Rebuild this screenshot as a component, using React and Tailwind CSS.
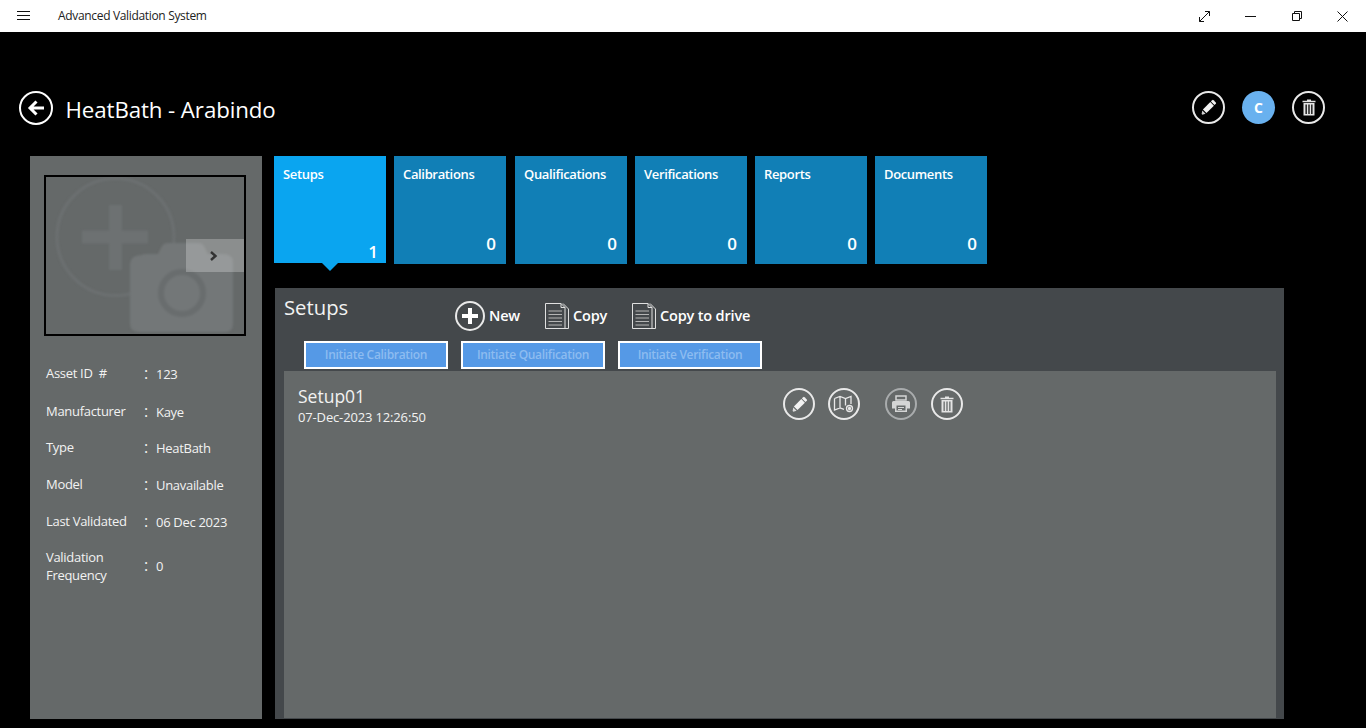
function Ring({ children, size = "w-[33px] h-[33px]", border = "border-[#e9e9e9]" }) {
  return (
    <div className={"shrink-0 rounded-full border-2 flex items-center justify-center " + size + " " + border}>
      {children}
    </div>
  );
}
function Pencil() {
  return (
    <svg width="17" height="17" viewBox="0 0 17 17" fill="#f2f2f2">
      <path d="M12.2 1.2a1 1 0 0 1 1.4 0l2.2 2.200a1 1 0 0 1 0 1.400l-1.300 1.300-3.600-3.600z" />
      <path d="M10.300 3.100l3.600 3.600-7.400 7.400-3.600-3.600z" />
      <path d="M2.300 11.400l3.300 3.300-3.200 1.100-.8-.8z" opacity=".85" />
    </svg>
  );
}
function Trash() {
  return (
    <svg width="14" height="17" viewBox="0 0 14 17" fill="#e4e4e4">
      <path d="M5 .5h4v1.200h4.500v1.500H.5V1.700H5z" />
      <path fillRule="evenodd" d="M1.500 4h11v12.500h-11zM3.500 5.500v9.500h1.300V5.500zM6.350 5.500v9.500h1.300V5.500zM9.200 5.500v9.500h1.300V5.500z" />
    </svg>
  );
}
function Doc() {
  return (
    <svg width="24" height="26" viewBox="0 0 24 26" fill="none" stroke="#e0e0e0" strokeWidth="1">
      <path d="M.5.500h15.500l4 4v21H.5z" />
      <path d="M16 .5v4h4" />
      <path d="M18 .5l5.500 5.500v19.500h-3.500" />
      <path d="M3.500 8h13.500M3.500 11.500h13.500M3.500 15h13.500M3.500 18.500h13.500M3.500 22h13.500" stroke="#b5b5b5" />
    </svg>
  );
}
function Tab({ label, n, active, extra = "" }) {
  return (
    <div className={"relative w-[112px] " + (active ? "h-[107px] bg-[#0aa5f0]" : "h-[108px] bg-[#117fb6]") + " " + extra}>
      <div className="absolute left-[9px] top-[9px] text-[13px] leading-[18px] font-semibold text-white tracking-[-0.35px]">{label}</div>
      <div className={"absolute text-[17px] leading-[22px] font-semibold text-white " + (active ? "right-[8px] bottom-0" : "right-[10px] bottom-[9px]")}>{n}</div>
      {active && (
        <div className="absolute left-[48px] top-full w-0 h-0 border-l-[8px] border-r-[8px] border-t-[8px] border-l-transparent border-r-transparent border-t-[#0aa5f0]" />
      )}
    </div>
  );
}
function Info({ label, value, h, label2 }) {
  return (
    <div className={"flex items-center text-[13px] text-[#f2f2f2] " + h}>
      <div className={"w-[98px] leading-[18px] tracking-[-0.3px] shrink-0 whitespace-pre " + (label2 ? "" : "-translate-y-px")}>
        {label}
        {label2 && <br />}
        {label2}
      </div>
      <div className="w-[12px] text-[16px] shrink-0 leading-[18px] -translate-y-px">:</div>
      <div className="leading-[18px] tracking-[-0.3px]">{value}</div>
    </div>
  );
}
function InitBtn({ children }) {
  return (
    <div className="w-[144px] h-[28px] border-2 border-white bg-[#5599e6] flex items-center justify-center text-[12px] font-semibold text-[#8dbcf0] tracking-[-0.3px]">
      {children}
    </div>
  );
}
export default function App() {
  return (
    <div className="w-[1366px] h-[728px] bg-black overflow-hidden flex flex-col" style={{ fontFamily: '"Open Sans", sans-serif' }}>
      <div className="h-8 bg-white flex items-center shrink-0">
        <svg className="ml-[17px]" width="13" height="10" viewBox="0 0 13 10" stroke="#111" strokeWidth="1">
          <path d="M0 .5h13M0 4.500h13M0 8.500h13" />
        </svg>
        <div className="ml-[28px] text-[12px] tracking-[-0.33px] text-[#222]">Advanced Validation System</div>
        <div className="ml-auto flex items-center">
          <svg className="mr-[35px]" width="11" height="11" viewBox="0 0 11 11" fill="none" stroke="#111" strokeWidth="1">
            <path d="M.5 10.500l10-10M6 .5h4.500V5M.5 6v4.500H5" />
          </svg>
          <svg className="mr-[36px]" width="11" height="1" viewBox="0 0 11 1" stroke="#111">
            <path d="M0 .5h11" />
          </svg>
          <svg className="mr-[35px]" width="10" height="10" viewBox="0 0 10 10" fill="none" stroke="#111">
            <path d="M.5 2.500h7v7h-7zM2.500 2.500v-2h7v7h-2" />
          </svg>
          <svg className="mr-[18px]" width="11" height="11" viewBox="0 0 11 11" stroke="#111">
            <path d="M.5.500l10 10M10.500.500l-10 10" />
          </svg>
        </div>
      </div>
      <div className="h-[124px] shrink-0 flex items-start pt-[59px] pl-[19px]">
        <Ring size="w-[34px] h-[34px]" border="border-white">
          <svg width="20" height="18" viewBox="0 0 20 18" fill="none" stroke="#fff" strokeWidth="3">
            <path d="M18 9H4M10.500 2.500L4 9l6.500 6.500" />
          </svg>
        </Ring>
        <div className="ml-[12.500px] text-[22.300px] leading-[38px] text-white tracking-[-0.1px]">HeatBath - Arabindo</div>
        <div className="ml-auto mr-[41px] flex items-center gap-[17px]">
          <Ring><Pencil /></Ring>
          <div className="w-[33px] h-[33px] rounded-full bg-[#69b1ef] flex items-center justify-center text-white text-[14px] font-bold">C</div>
          <Ring><Trash /></Ring>
        </div>
      </div>
      <div className="flex pl-[30px] gap-[12px]">
        <div className="w-[232px] h-[563px] bg-[#656969] pt-[19px] pl-[14px]">
          <div className="relative w-[202px] h-[161px] border-2 border-black overflow-hidden">
            <svg width="198" height="157" viewBox="0 0 198 157" className="absolute left-0 top-0 blur-[0.8px]">
              <circle cx="69.500" cy="60" r="58.500" fill="none" stroke="#6c7071" strokeWidth="3" />
              <path d="M69.500 28v65M36 60h66" stroke="#6d7172" strokeWidth="13" />
              <path d="M96 78q0-1 4-1h12l4-8q2-3 6-3h30q4 0 6 3l4 8h14q11 0 11 8v62q0 8-8 8H94q-10 0-10-8V88q0-10 12-10z" fill="#737778" />
              <circle cx="136" cy="116" r="21" fill="#737778" stroke="#696d6e" strokeWidth="6" />
            </svg>
            <div className="absolute right-0 top-[62px] w-[58px] h-[33px] bg-[#ffffff]/25 flex items-center justify-center">
              <svg width="10" height="10" viewBox="0 0 10 10" fill="none" stroke="#333" strokeWidth="2.400" className="-ml-[2px]">
                <path d="M2 1l4.500 4L2 9" />
              </svg>
            </div>
          </div>
          <div className="mt-[19px] pl-[2px]">
            <Info label="Asset ID  #" value="123" h="h-[37px]" />
            <Info label="Manufacturer" value="Kaye" h="h-[37px] pt-[2px]" />
            <Info label="Type" value="HeatBath" h="h-[37px]" />
            <Info label="Model" value="Unavailable" h="h-[37px]" />
            <Info label="Last Validated" value="06 Dec 2023" h="h-[37px]" />
            <Info label="Validation" label2="Frequency" value="0" h="h-[52px]" />
          </div>
        </div>
        <div className="flex flex-col">
          <div className="flex gap-[8px] h-[132px] items-start">
            <Tab label="Setups" n="1" active />
            <Tab label="Calibrations" n="0" />
            <Tab label="Qualifications" n="0" extra="ml-px" />
            <Tab label="Verifications" n="0" />
            <Tab label="Reports" n="0" />
            <Tab label="Documents" n="0" />
          </div>
          <div className="ml-px w-[1009px] h-[431px] bg-[#44484b] flex flex-col pl-[9px] pb-px">
            <div className="flex h-[53px] items-start">
              <div className="w-[171px] pt-[4px] text-[20.300px] leading-[30px] text-[#f2f2f2]">Setups</div>
              <div className="flex items-center pt-[12.500px] text-white text-[14.500px] font-semibold tracking-[-0.17px]">
                <Ring size="w-[30px] h-[30px]">
                  <svg width="18" height="18" viewBox="0 0 18 18" stroke="#fff" strokeWidth="4"><path d="M9 1v16M1 9h16" /></svg>
                </Ring>
                <span className="ml-[4px] w-[56px]">New</span>
                <Doc />
                <span className="ml-[4px] w-[59px]">Copy</span>
                <Doc />
                <span className="ml-[4px]">Copy to drive</span>
              </div>
            </div>
            <div className="flex gap-[13px] pl-[20px]">
              <InitBtn>Initiate Calibration</InitBtn>
              <InitBtn>Initiate Qualification</InitBtn>
              <InitBtn>Initiate Verification</InitBtn>
            </div>
            <div className="mt-[2px] w-[992px] flex-1 bg-[#656969] flex items-start pt-[14px] pl-[14px]">
              <div className="w-[485px]">
                <div className="text-[17.500px] leading-[23px] text-[#f2f2f2]">Setup01</div>
                <div className="text-[13px] leading-[18px] text-[#f2f2f2] tracking-[-0.15px]">07-Dec-2023 12:26:50</div>
              </div>
              <div className="flex items-center pt-[3px]">
                <Ring size="w-[32px] h-[32px]"><Pencil /></Ring>
                <div className="ml-[13px]">
                  <Ring size="w-[32px] h-[32px]">
                    <svg width="22" height="18" viewBox="0 0 22 18" fill="none" stroke="#e8e8e8" strokeWidth="1.300">
                      <path d="M1.500 3.500l5.500-2 5.500 2 5.500-2v7.500M1.500 3.500v11.500l5.500-2 4 1.400M7 1.500v11.500M12.500 3.500v7" />
                      <circle cx="16.500" cy="13.500" r="3" />
                      <circle cx="16.500" cy="13.500" r="1" fill="#e8e8e8" />
                    </svg>
                  </Ring>
                </div>
                <div className="ml-[25px]">
                  <Ring size="w-[32px] h-[32px]" border="border-[#a9acad]">
                    <svg width="20" height="18" viewBox="0 0 20 18" fill="#d4d5d5">
                      <path d="M5 1h10v4H5z" stroke="#d4d5d5" fill="none" strokeWidth="1.500" />
                      <path fillRule="evenodd" d="M2.500 6h15A1.500 1.500 0 0 1 19 7.500V13.500h-3V17H4v-3.500H1V7.500A1.500 1.500 0 0 1 2.500 6zM5.500 10.500v5h9v-5z" />
                      <path d="M7 12h6v1H7zM7 14h4v1H7z" />
                    </svg>
                  </Ring>
                </div>
                <div className="ml-[14px]">
                  <Ring size="w-[32px] h-[32px]"><Trash /></Ring>
                </div>
              </div>
            </div>
          </div>
        </div>
      </div>
    </div>
  );
}
